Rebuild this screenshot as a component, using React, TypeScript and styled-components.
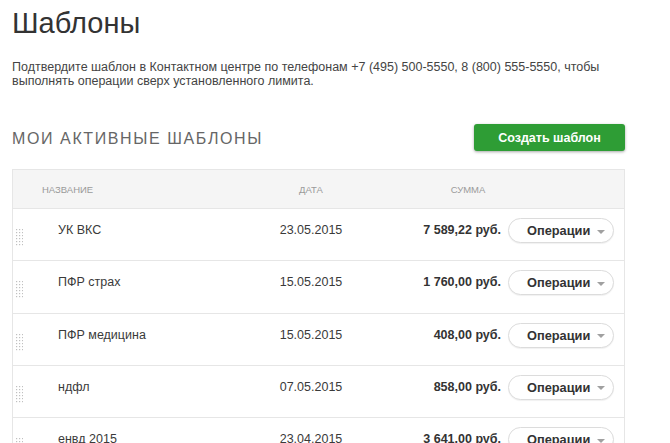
import styled, { createGlobalStyle } from 'styled-components';

const GlobalStyle = createGlobalStyle`
  body {
    margin: 0;
    background: #fff;
    font-family: 'Liberation Sans', Arial, sans-serif;
    color: #333;
  }
`;

let Page = styled.div`
  width: 613px;
  padding: 9px 0 0 12px;
`;

let Title = styled.h1`
  margin: 0;
  font-size: 29px;
  line-height: 29px;
  font-weight: normal;
  color: #333;
`;

let Note = styled.p`
  margin: 22px 0 0;
  font-size: 12.5px;
  line-height: 14px;
  color: #444;
`;

let SectionHeader = styled.div`
  display: flex;
  justify-content: space-between;
  align-items: center;
  margin-top: 36px;
`;

let SectionTitle = styled.h2`
  margin: 2px 0 0;
  font-size: 16px;
  font-weight: normal;
  letter-spacing: 1.6px;
  color: #666;
`;

let CreateButton = styled.button`
  width: 151px;
  height: 27px;
  border: none;
  border-radius: 3px;
  background: #2e9d35;
  box-shadow: 0 1px 3px rgba(0, 0, 0, 0.35);
  color: #fff;
  font-family: 'Liberation Sans', Arial, sans-serif;
  font-size: 12.5px;
  font-weight: bold;
  cursor: pointer;
`;

let Table = styled.div`
  margin-top: 18px;
  border: 1px solid #e6e6e6;
  border-bottom: none;
`;

let HeadRow = styled.div`
  display: grid;
  grid-template-columns: 29px 208px 122px 192px 1fr;
  align-items: center;
  height: 38px;
  background: #f5f5f5;
  border-bottom: 1px solid #e6e6e6;
`;

let HeadCell = styled.div<{ $align?: string }>`
  font-size: 9.5px;
  color: #9a9a9a;
  text-transform: uppercase;
  text-align: ${(p) => p.$align || 'left'};
`;

let Row = styled.div`
  display: grid;
  grid-template-columns: 45px 192px 122px 129px 113px 1fr;
  align-items: start;
  padding-top: 9px;
  box-sizing: border-box;
  height: 52.3px;
  border-bottom: 1px solid #e6e6e6;
`;

let Grip = styled.svg`
  margin: 11px 0 0 3px;
  display: block;
`;

let Cell = styled.div<{ $align?: string; $bold?: boolean }>`
  height: 25px;
  line-height: 25px;
  font-size: 12.5px;
  color: ${(p) => (p.$bold ? '#333' : '#3a3a3a')};
  font-weight: ${(p) => (p.$bold ? 'bold' : 'normal')};
  text-align: ${(p) => p.$align || 'left'};
  white-space: nowrap;
`;

let OpsButton = styled.button`
  margin-left: 7px;
  width: 106px;
  height: 25px;
  padding: 0 0 0 18px;
  display: flex;
  align-items: center;
  gap: 7px;
  border: 1px solid #dcdcdc;
  border-radius: 13px;
  background: #fff;
  box-shadow: 0 1px 1px rgba(0, 0, 0, 0.06);
  font-family: 'Liberation Sans', Arial, sans-serif;
  font-size: 12.8px;
  font-weight: bold;
  color: #333;
  cursor: pointer;
`;

let Caret = styled.span`
  width: 0;
  height: 0;
  margin-top: 2px;
  border-left: 4.5px solid transparent;
  border-right: 4.5px solid transparent;
  border-top: 4px solid #a0a0a0;
`;

type Template = { name: string; date: string; sum: string };

const templates: Template[] = [
  { name: 'УК ВКС', date: '23.05.2015', sum: '7 589,22 руб.' },
  { name: 'ПФР страх', date: '15.05.2015', sum: '1 760,00 руб.' },
  { name: 'ПФР медицина', date: '15.05.2015', sum: '408,00 руб.' },
  { name: 'ндфл', date: '07.05.2015', sum: '858,00 руб.' },
  { name: 'енвд 2015', date: '23.04.2015', sum: '3 641,00 руб.' },
];

const GripIcon = () => (
  <Grip width="7" height="17" viewBox="0 0 7 17">
    {[0, 1, 2, 3, 4, 5].map((r) =>
      [0, 1, 2].map((c) => (
        <rect key={r + '-' + c} x={c * 3} y={r * 3} width="1.2" height="1.2" fill="#c0c0c0" />
      ))
    )}
  </Grip>
);

const App = () => {
  return (
    <Page>
      <GlobalStyle />
      <Title>Шаблоны</Title>
      <Note>
        Подтвердите шаблон в Контактном центре по телефонам +7 (495) 500-5550, 8 (800) 555-5550, чтобы
        выполнять операции сверх установленного лимита.
      </Note>
      <SectionHeader>
        <SectionTitle>МОИ АКТИВНЫЕ ШАБЛОНЫ</SectionTitle>
        <CreateButton>Создать шаблон</CreateButton>
      </SectionHeader>
      <Table>
        <HeadRow>
          <div />
          <HeadCell>Название</HeadCell>
          <HeadCell $align="center">Дата</HeadCell>
          <HeadCell $align="center">Сумма</HeadCell>
          <div />
        </HeadRow>
        {templates.map((t) => (
          <Row key={t.name}>
            <GripIcon />
            <Cell>{t.name}</Cell>
            <Cell $align="center">{t.date}</Cell>
            <Cell $align="right" $bold>{t.sum}</Cell>
            <OpsButton>
              Операции
              <Caret />
            </OpsButton>
            <div />
          </Row>
        ))}
      </Table>
    </Page>
  );
};

export default App;
